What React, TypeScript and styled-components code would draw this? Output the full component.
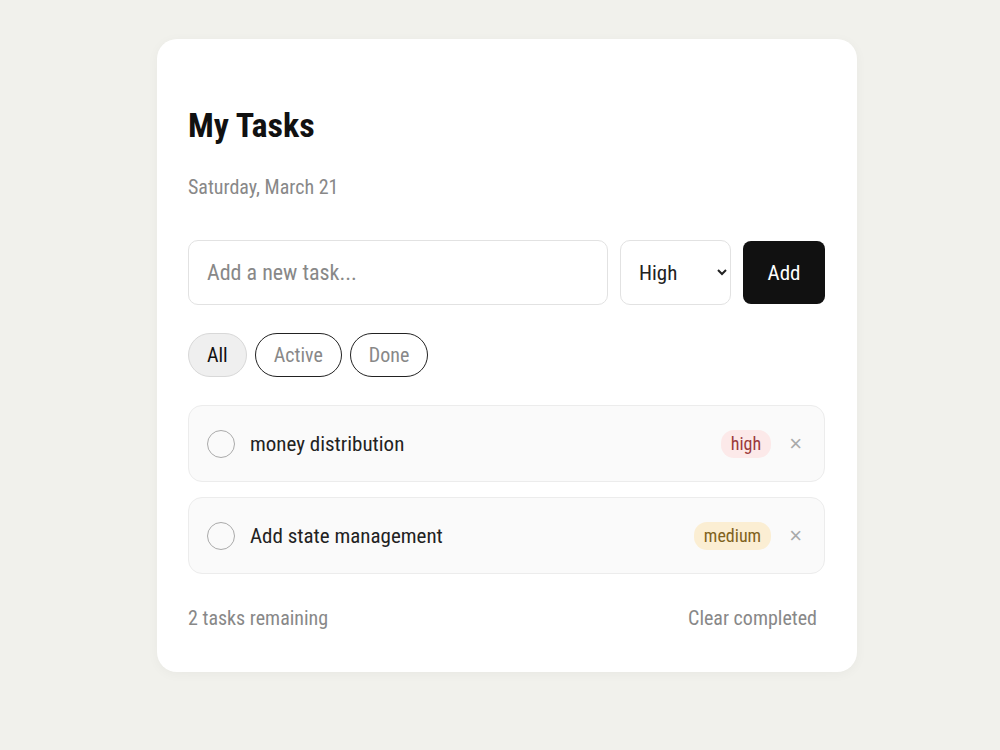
import React, { useState } from 'react';
import styled, { createGlobalStyle } from 'styled-components';

const GlobalStyle = createGlobalStyle`
  html, body {
    margin: 0;
    padding: 0;
    background: #f1f1ec;
    font-family: "Roboto Condensed", "DejaVu Sans Condensed", "Liberation Sans", Arial, sans-serif;
  }
  * { box-sizing: border-box; }
`;

const Page = styled.div`
  min-height: 750px;
  display: flex;
  justify-content: center;
  align-items: flex-start;
  padding: 39px 0 0 14px;
`;

const Card = styled.div`
  width: 700px;
  background: #fff;
  border-radius: 20px;
  padding: 64px 32px 42px 31px;
  box-shadow: 0 2px 12px rgba(0, 0, 0, 0.04);
`;

const Title = styled.h1`
  margin: 0;
  font-size: 34px;
  font-weight: 700;
  color: #111;
  line-height: 44px;
`;

const DateLine = styled.p`
  margin: 27px 0 0;
  font-size: 20px;
  color: #888;
  line-height: 26px;
`;

const AddRow = styled.div`
  display: flex;
  gap: 12px;
  margin-top: 40px;
`;

const TaskInput = styled.input`
  flex: 1;
  height: 65px;
  border: 1px solid #e2e2e2;
  border-radius: 10px;
  padding: 0 18px;
  font-family: inherit;
  font-size: 22px;
  color: #222;
  outline: none;
  &::placeholder { color: #888; }
`;

const PrioritySelect = styled.select`
  width: 111px;
  height: 65px;
  border: 1px solid #e2e2e2;
  border-radius: 10px;
  padding: 0 10px 0 14px;
  font-family: inherit;
  font-size: 21px;
  color: #222;
  background: #fff;
`;

const AddButton = styled.button`
  width: 82px;
  height: 63px;
  margin-top: 1px;
  border: none;
  border-radius: 8px;
  background: #111;
  color: #fff;
  font-family: inherit;
  font-size: 21px;
  font-weight: 400;
`;

const Filters = styled.div`
  display: flex;
  gap: 8px;
  margin-top: 28px;
`;

const FilterPill = styled.button<{ $active?: boolean }>`
  height: 44px;
  padding: 0 18px;
  border-radius: 22px;
  font-family: inherit;
  font-size: 20px;
  border: 1px solid ${p => (p.$active ? '#d8d8d8' : '#222')};
  background: ${p => (p.$active ? '#efefef' : '#fff')};
  color: ${p => (p.$active ? '#111' : '#888')};
`;

const List = styled.div`
  display: flex;
  flex-direction: column;
  gap: 15px;
  margin-top: 28px;
`;

const TaskRow = styled.div`
  display: flex;
  align-items: center;
  height: 77px;
  padding: 0 22px 0 18px;
  background: #fafafa;
  border: 1px solid #ececec;
  border-radius: 14px;
`;

const Check = styled.span`
  width: 28px;
  height: 28px;
  border-radius: 50%;
  border: 1.5px solid #aaa;
  flex-shrink: 0;
`;

const TaskText = styled.span`
  flex: 1;
  margin-left: 15px;
  font-size: 21px;
  color: #222;
`;

const Badge = styled.span<{ $level: 'high' | 'medium' | 'low' }>`
  padding: 2px 10px;
  border-radius: 13px;
  font-size: 18px;
  line-height: 24px;
  background: ${p => (p.$level === 'high' ? '#fce9e9' : p.$level === 'medium' ? '#fbeed3' : '#e6f4ea')};
  color: ${p => (p.$level === 'high' ? '#9b3a3a' : p.$level === 'medium' ? '#7f6220' : '#2f6b3c')};
`;

const Remove = styled.button`
  margin-left: 18px;
  border: none;
  background: none;
  padding: 0;
  font-size: 22px;
  color: #aaa;
  font-family: "Liberation Sans", Arial, sans-serif;
  line-height: 1;
`;

const Footer = styled.div`
  display: flex;
  justify-content: space-between;
  align-items: center;
  margin-top: 32px;
  font-size: 20px;
  color: #888;
`;

const ClearButton = styled.button`
  border: none;
  background: none;
  padding: 0 8px;
  font-family: inherit;
  font-size: 20px;
  color: #888;
`;

type Task = { id: number; text: string; priority: 'high' | 'medium' | 'low'; done: boolean };

export default function App() {
  const [tasks] = useState<Task[]>([
    { id: 1, text: 'money distribution', priority: 'high', done: false },
    { id: 2, text: 'Add state management', priority: 'medium', done: false },
  ]);
  const [filter, setFilter] = useState('All');

  return (
    <>
      <GlobalStyle />
      <Page>
        <Card>
          <Title>My Tasks</Title>
          <DateLine>Saturday, March 21</DateLine>
          <AddRow>
            <TaskInput placeholder="Add a new task..." />
            <PrioritySelect defaultValue="High">
              <option>High</option>
              <option>Medium</option>
              <option>Low</option>
            </PrioritySelect>
            <AddButton>Add</AddButton>
          </AddRow>
          <Filters>
            {['All', 'Active', 'Done'].map(f => (
              <FilterPill key={f} $active={filter === f} onClick={() => setFilter(f)}>
                {f}
              </FilterPill>
            ))}
          </Filters>
          <List>
            {tasks.map(t => (
              <TaskRow key={t.id}>
                <Check />
                <TaskText>{t.text}</TaskText>
                <Badge $level={t.priority}>{t.priority}</Badge>
                <Remove>×</Remove>
              </TaskRow>
            ))}
          </List>
          <Footer>
            <span>{tasks.filter(t => !t.done).length} tasks remaining</span>
            <ClearButton>Clear completed</ClearButton>
          </Footer>
        </Card>
      </Page>
    </>
  );
}
